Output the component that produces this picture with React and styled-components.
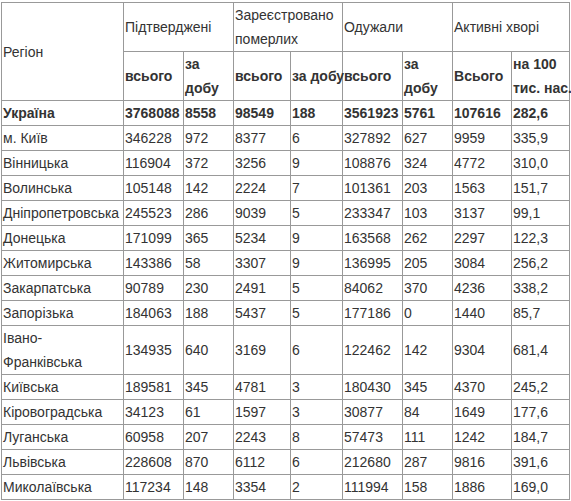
import React from "react";
import styled, { createGlobalStyle } from "styled-components";

const Global = createGlobalStyle`
  html, body { margin: 0; padding: 0; background: #fff; overflow: hidden; }
  body { font-family: "Liberation Sans", Arial, sans-serif; color: #333; }
`;

const Wrap = styled.div`
  padding: 2px 0 0 1px;
`;

const Table = styled.table`
  border-collapse: collapse;
  table-layout: fixed;
  width: 569px;
  font-size: 14px;
  line-height: 24px;
`;

const Cell = styled.td`
  border: 1px solid #999;
  padding: ${(p) => (p.$region ? "0 5px 0 1px" : "0 0 0 1px")};
  vertical-align: middle;
  text-align: left;
  font-weight: ${(p) => (p.$bold ? "bold" : "normal")};
  overflow: visible;
  white-space: ${(p) => (p.$nowrap ? "nowrap" : "normal")};
`;

const widths = [122, 60, 50, 57, 52, 60, 50, 59, 58];

const rows = [
  ["Україна", "3768088", "8558", "98549", "188", "3561923", "5761", "107616", "282,6"],
  ["м. Київ", "346228", "972", "8377", "6", "327892", "627", "9959", "335,9"],
  ["Вінницька", "116904", "372", "3256", "9", "108876", "324", "4772", "310,0"],
  ["Волинська", "105148", "142", "2224", "7", "101361", "203", "1563", "151,7"],
  ["Дніпропетровська", "245523", "286", "9039", "5", "233347", "103", "3137", "99,1"],
  ["Донецька", "171099", "365", "5234", "9", "163568", "262", "2297", "122,3"],
  ["Житомирська", "143386", "58", "3307", "9", "136995", "205", "3084", "256,2"],
  ["Закарпатська", "90789", "230", "2491", "5", "84062", "370", "4236", "338,2"],
  ["Запорізька", "184063", "188", "5437", "5", "177186", "0", "1440", "85,7"],
  ["Івано-Франківська", "134935", "640", "3169", "6", "122462", "142", "9304", "681,4"],
  ["Київська", "189581", "345", "4781", "3", "180430", "345", "4370", "245,2"],
  ["Кіровоградська", "34123", "61", "1597", "3", "30877", "84", "1649", "177,6"],
  ["Луганська", "60958", "207", "2243", "8", "57473", "111", "1242", "184,7"],
  ["Львівська", "228608", "870", "6112", "6", "212680", "287", "9816", "391,6"],
  ["Миколаївська", "117234", "148", "3354", "2", "111994", "158", "1886", "169,0"],
];

export default function App() {
  return (
    <>
      <Global />
      <Wrap>
        <Table>
          <colgroup>
            {widths.map((w, i) => (
              <col key={i} style={{ width: w }} />
            ))}
          </colgroup>
          <tbody>
            <tr>
              <Cell rowSpan={2}>Регіон</Cell>
              <Cell colSpan={2}>Підтверджені</Cell>
              <Cell colSpan={2}>Зареєстровано померлих</Cell>
              <Cell colSpan={2}>Одужали</Cell>
              <Cell colSpan={2}>Активні хворі</Cell>
            </tr>
            <tr>
              <Cell $bold>всього</Cell>
              <Cell $bold>за добу</Cell>
              <Cell $bold>всього</Cell>
              <Cell $bold $nowrap>за добу</Cell>
              <Cell $bold>всього</Cell>
              <Cell $bold>за добу</Cell>
              <Cell $bold>Всього</Cell>
              <Cell $bold $nowrap>
                на 100
                <br />
                тис. нас.
              </Cell>
            </tr>
            {rows.map((r, i) => (
              <tr key={i}>
                {r.map((c, j) => (
                  <Cell key={j} $bold={i === 0} $region={j === 0}>
                    {c}
                  </Cell>
                ))}
              </tr>
            ))}
          </tbody>
        </Table>
      </Wrap>
    </>
  );
}
